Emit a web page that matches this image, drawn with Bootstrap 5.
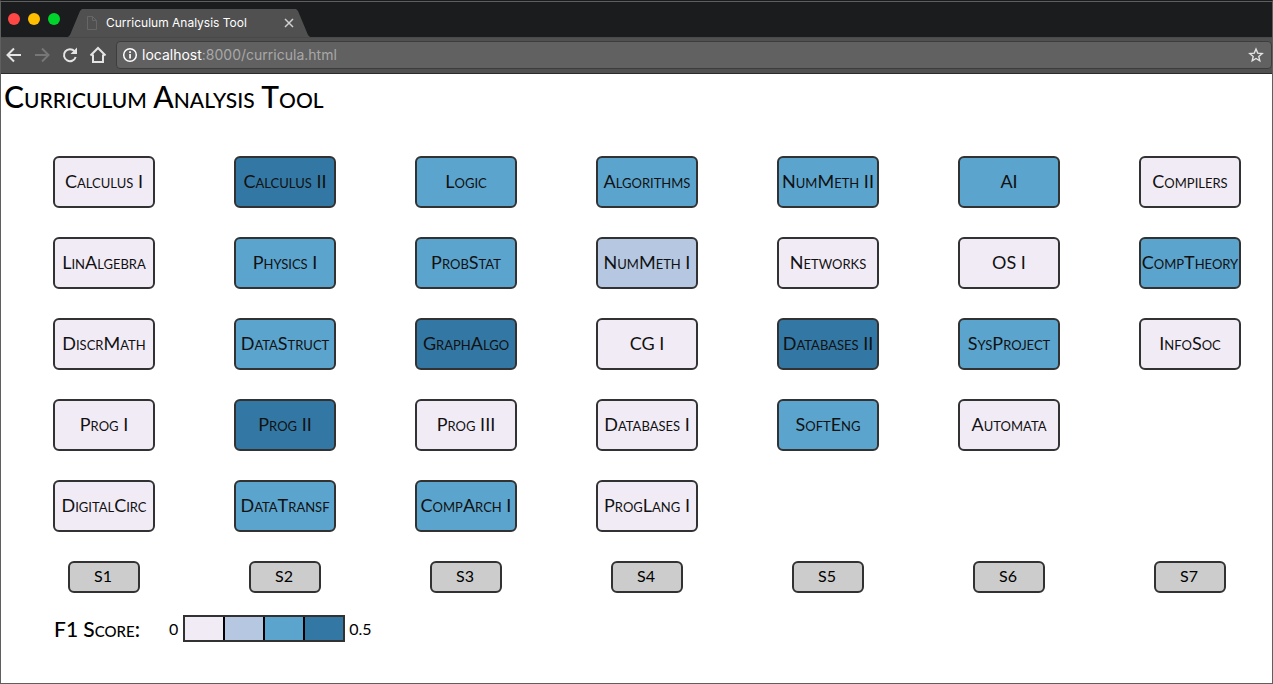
<!DOCTYPE html>
<html lang="en">
<head>
<meta charset="utf-8">
<meta name="viewport" content="width=device-width, initial-scale=1">
<title>Curriculum Analysis Tool</title>
<link href="https://cdn.jsdelivr.net/npm/bootstrap@5.3.0/dist/css/bootstrap.min.css" rel="stylesheet">
<style>
  :root { --f0: #f1ebf6; --f1: #b6c8e1; --f2: #5ba4cd; --f3: #3378a4; --edge: #323232; }
  body { font-family: Lato, "Open Sans", sans-serif; color: #000; line-height: 1.2; }
  .window { border: 1px solid #5f5f5f; border-top-color: #1a1b1d; border-bottom-width: 2px; }
  .browser { font-family: Inter, Roboto, "Liberation Sans", sans-serif; color: #fff; }
  .titlebar { background: #1b1c1e; height: 36px; border-top: 1px solid #5f5f5f; padding-left: 7px; }
  .light { width: 12px; height: 12px; margin-top: 11px; }
  .tab { width: 242px; height: 28px; margin-left: 8px; padding: 0 15px 0 18px; background: #505050; font-size: 12px;
    clip-path: polygon(0 100%, 2px 93%, 12px 7%, 14px 0, 228px 0, 230px 7%, 240px 93%, 100% 100%); }
  .newtab { width: 32px; height: 14px; background: #3a3a3a; margin-bottom: 6px; margin-left: -2px;
    clip-path: polygon(0 0, 26px 0, 28px 2px, 100% 100%, 6px 100%, 4px 12px); }
  .toolbar { background: #505050; height: 37px; border-top: 1px solid #48494a; border-bottom: 1px solid #2b2b2b; padding: 0 0 2px 3px; }
  .plain { background: none; border: 0; padding: 0; line-height: 0; color: inherit; }
  .address { height: 28px; background: #616161; border: 1px solid #3d3d3d; border-radius: 4px; padding: 0 7px 0 5px; font-size: 14px; line-height: 18px; color: #a8a8a8; margin-left: 8px; }
  .smallcaps { font-variant: small-caps; }
  .heading { font-size: 30px; line-height: 36px; font-weight: 500; padding: 4px 3px 2px; }
  .plan { padding: 40px 31px 0 52px; }
  .term { width: 102px; }
  .courses { height: 376px; gap: 29px; }
  .course { width: 102px; height: 52px; border: 2px solid var(--edge); border-radius: 6px; font-size: 18px; line-height: 20px; padding: 0 0 2px; color: #111; white-space: nowrap;
    display: flex; justify-content: center; align-items: center; }
  .term-name { width: 72px; height: 32px; margin-top: 29px; border: 2px solid var(--edge); border-radius: 6px; background: #ccc; font-size: 16px; padding: 0 2px 2px 0; }
  .s0 { background: var(--f0); } .s1 { background: var(--f1); } .s2 { background: var(--f2); } .s3 { background: var(--f3); }
  .legend { padding: 22px 0 41px 53px; font-size: 16px; }
  .legend-title { font-size: 21px; width: 115px; line-height: 27px; font-weight: 500; }
  .scale { border: 2px solid var(--edge); height: 27px; margin: 0 4px 0 5px; }
  .scale span { width: 40px; border-right: 2px solid #000; }
  .scale span:last-child { width: 38px; border: 0; }
</style>
</head>
<body>
<div class="window">
  <header class="browser">
    <div class="titlebar d-flex">
      <div class="d-flex gap-2">
        <svg class="light" viewBox="0 0 12 12"><circle cx="6" cy="6" r="6" fill="#ff4845"/></svg>
        <svg class="light" viewBox="0 0 12 12"><circle cx="6" cy="6" r="6" fill="#ffbe00"/></svg>
        <svg class="light" viewBox="0 0 12 12"><circle cx="6" cy="6" r="6" fill="#00d42c"/></svg>
      </div>
      <div class="tab d-flex align-items-center align-self-end">
        <svg width="12" height="14" viewBox="0 0 12 14" fill="none" stroke="#666"><path d="M1.500 .5h5l4 4v9h-9zM6.500 .5v4h4"/></svg>
        <span class="flex-grow-1 text-nowrap ms-2">Curriculum Analysis Tool</span>
        <button class="plain" aria-label="Close tab"><svg width="12" height="12" viewBox="0 0 12 12" stroke="#d0d0d0" stroke-width="1.500"><path d="M2 2l8 8M10 2l-8 8"/></svg></button>
      </div>
      <button class="newtab plain align-self-end" aria-label="New tab"></button>
    </div>
    <div class="toolbar d-flex align-items-center">
      <nav class="d-flex gap-2">
        <button class="plain" aria-label="Back"><svg width="20" height="20" viewBox="0 0 20 20" fill="none" stroke="#e4e4e4" stroke-width="2"><path d="M17 10H4M10 3.500L3.500 10 10 16.500"/></svg></button>
        <button class="plain" aria-label="Forward"><svg width="20" height="20" viewBox="0 0 20 20" fill="none" stroke="#777" stroke-width="2"><path d="M3 10h13M10 3.500l6.500 6.500L10 16.500"/></svg></button>
        <button class="plain" aria-label="Reload"><svg width="20" height="20" viewBox="0 0 20 20"><path d="M14.500 6.200A6 6 0 1 0 15.700 12" fill="none" stroke="#e4e4e4" stroke-width="2"/><path d="M17 2.500V9h-6.500z" fill="#e4e4e4"/></svg></button>
        <button class="plain" aria-label="Home"><svg width="20" height="20" viewBox="0 0 20 20" fill="none" stroke="#e4e4e4" stroke-width="2"><path d="M2.500 10.500L10 3l7.500 7.500M5 9.500V17h10V9.500"/></svg></button>
      </nav>
      <div class="address d-flex align-items-center flex-grow-1">
        <svg class="me-1" width="16" height="16" viewBox="0 0 16 16"><circle cx="8" cy="8" r="6.300" fill="none" stroke="#fff" stroke-width="1.500"/><path d="M7.200 7h1.700v4.500H7.200zM7.200 4.300h1.700V6H7.200z" fill="#fff"/></svg>
        <div role="textbox" aria-label="Address" class="flex-grow-1"><span class="text-white">localhost</span>:8000/curricula.html</div>
        <button class="plain" aria-label="Bookmark"><svg width="16" height="16" viewBox="0 0 16 16" fill="none" stroke="#e4e4e4" stroke-width="1.400"><path d="M8 2l1.700 4.100 4.500.4-3.400 2.900 1 4.400L8 11.500l-3.800 2.300 1-4.400L1.800 6.500l4.500-.4z"/></svg></button>
      </div>
    </div>
  </header>
  <main class="smallcaps">
    <h1 class="heading m-0">Curriculum Analysis Tool</h1>
    <div class="plan d-flex justify-content-between">
      <section class="term">
        <div class="courses d-flex flex-column">
          <button class="smallcaps course s0">Calculus I</button>
          <button class="smallcaps course s0">LinAlgebra</button>
          <button class="smallcaps course s0">DiscrMath</button>
          <button class="smallcaps course s0">Prog I</button>
          <button class="smallcaps course s0">DigitalCirc</button>
        </div>
        <div class="term-name d-flex align-items-center justify-content-center mx-auto">S1</div>
      </section>
      <section class="term">
        <div class="courses d-flex flex-column">
          <button class="smallcaps course s3">Calculus II</button>
          <button class="smallcaps course s2">Physics I</button>
          <button class="smallcaps course s2">DataStruct</button>
          <button class="smallcaps course s3">Prog II</button>
          <button class="smallcaps course s2">DataTransf</button>
        </div>
        <div class="term-name d-flex align-items-center justify-content-center mx-auto">S2</div>
      </section>
      <section class="term">
        <div class="courses d-flex flex-column">
          <button class="smallcaps course s2">Logic</button>
          <button class="smallcaps course s2">ProbStat</button>
          <button class="smallcaps course s3">GraphAlgo</button>
          <button class="smallcaps course s0">Prog III</button>
          <button class="smallcaps course s2">CompArch I</button>
        </div>
        <div class="term-name d-flex align-items-center justify-content-center mx-auto">S3</div>
      </section>
      <section class="term">
        <div class="courses d-flex flex-column">
          <button class="smallcaps course s2">Algorithms</button>
          <button class="smallcaps course s1">NumMeth I</button>
          <button class="smallcaps course s0">CG I</button>
          <button class="smallcaps course s0">Databases I</button>
          <button class="smallcaps course s0">ProgLang I</button>
        </div>
        <div class="term-name d-flex align-items-center justify-content-center mx-auto">S4</div>
      </section>
      <section class="term">
        <div class="courses d-flex flex-column">
          <button class="smallcaps course s2">NumMeth II</button>
          <button class="smallcaps course s0">Networks</button>
          <button class="smallcaps course s3">Databases II</button>
          <button class="smallcaps course s2">SoftEng</button>
        </div>
        <div class="term-name d-flex align-items-center justify-content-center mx-auto">S5</div>
      </section>
      <section class="term">
        <div class="courses d-flex flex-column">
          <button class="smallcaps course s2">AI</button>
          <button class="smallcaps course s0">OS I</button>
          <button class="smallcaps course s2">SysProject</button>
          <button class="smallcaps course s0">Automata</button>
        </div>
        <div class="term-name d-flex align-items-center justify-content-center mx-auto">S6</div>
      </section>
      <section class="term">
        <div class="courses d-flex flex-column">
          <button class="smallcaps course s0">Compilers</button>
          <button class="smallcaps course s2">CompTheory</button>
          <button class="smallcaps course s0">InfoSoc</button>
        </div>
        <div class="term-name d-flex align-items-center justify-content-center mx-auto">S7</div>
      </section>
    </div>
    <div class="legend d-flex align-items-center">
      <span class="legend-title">F1 Score:</span>
      <span>0</span>
      <div class="scale d-flex"><span class="s0"></span><span class="s1"></span><span class="s2"></span><span class="s3"></span></div>
      <span>0.5</span>
    </div>
  </main>
</div>
<script src="https://cdn.jsdelivr.net/npm/bootstrap@5.3.0/dist/js/bootstrap.bundle.min.js"></script>
</body>
</html>
